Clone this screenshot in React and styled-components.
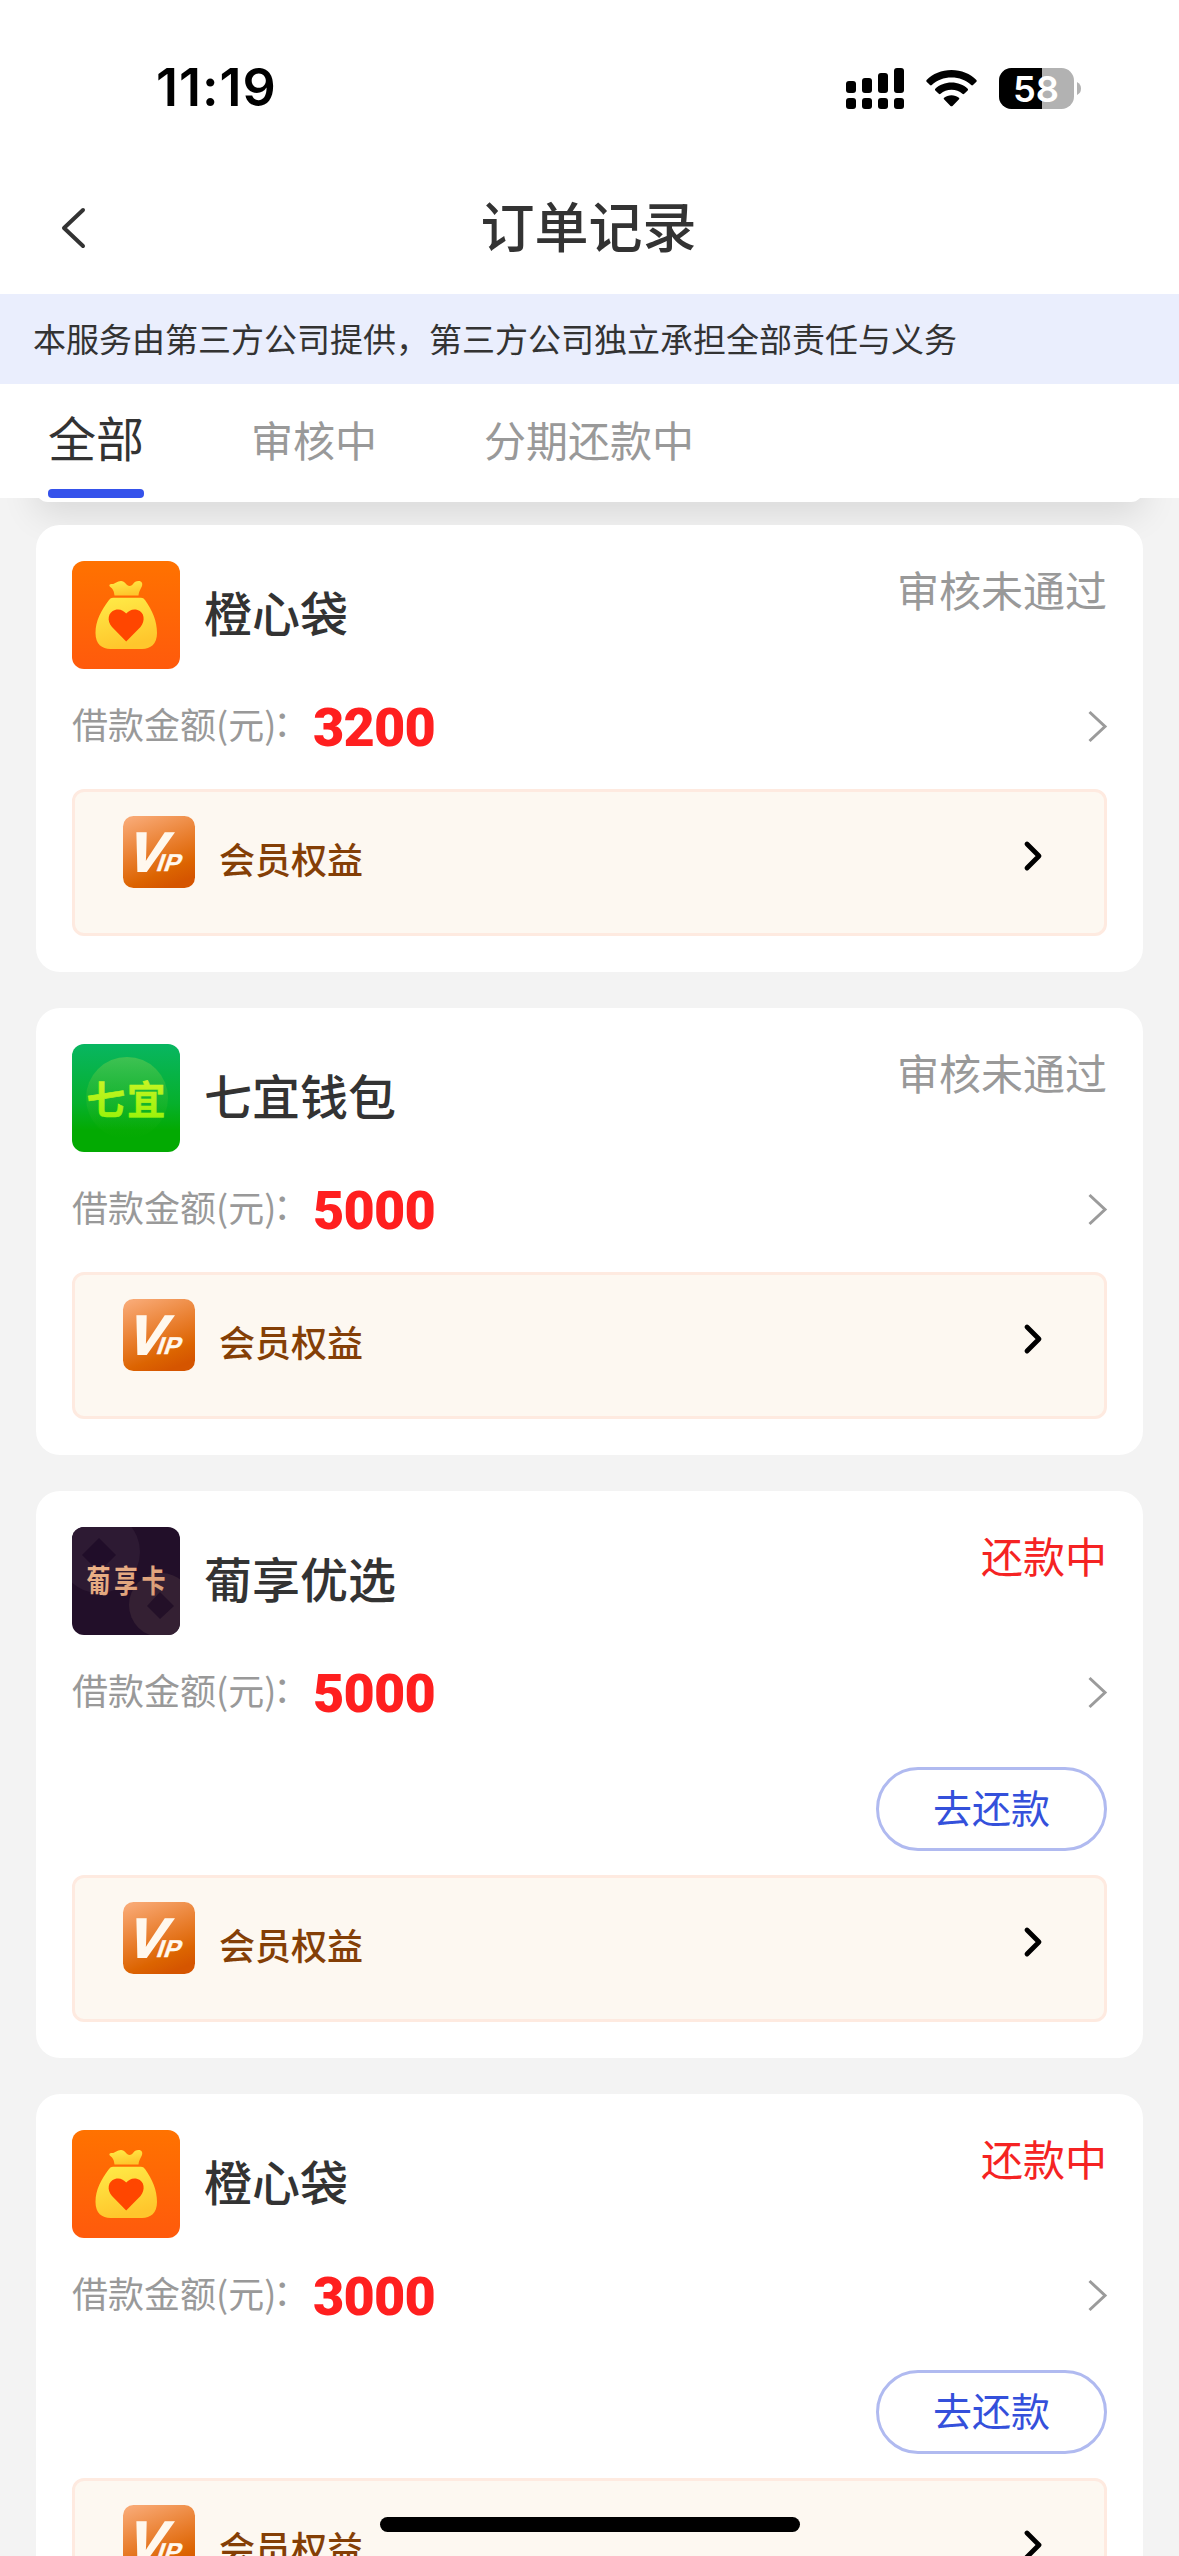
import React from "react";
import styled, { createGlobalStyle } from "styled-components";

const GlobalStyle = createGlobalStyle`
  *, *::before, *::after { box-sizing: border-box; }
  html, body { margin: 0; padding: 0; }
  body {
    background: #f3f3f3;
    color: #333;
    font-family: "Noto Sans CJK SC", "Noto Sans", sans-serif;
    overflow: hidden;
  }
  svg { display: block; overflow: visible; }
`;

const Screen = styled.div`
  position: relative;
  display: flex;
  flex-direction: column;
  width: 1179px;
  height: 2556px;
  overflow: hidden;
  background: #f3f3f3;
`;

const StatusBar = styled.div`
  flex: none;
  display: flex;
  justify-content: space-between;
  align-items: center;
  height: 162px;
  padding: 14px 98px 0 156px;
  background: #fff;
`;

const Clock = styled.div`
  font-family: Inter, sans-serif;
  font-size: 52px;
  font-weight: 600;
  line-height: 60px;
  letter-spacing: 1px;
  color: #000;
`;

const StatusIcons = styled.div`
  display: flex;
  align-items: center;
  gap: 22px;
`;

const NavBar = styled.header`
  flex: none;
  display: grid;
  grid-template-columns: 120px 1fr 120px;
  align-items: center;
  height: 132px;
  background: #fff;
`;

const BackButton = styled.button`
  display: flex;
  border: 0;
  padding: 0 0 0 60px;
  background: none;
`;

const Title = styled.h1`
  margin: 0;
  padding: 0 2px 6px 0;
  font-size: 54px;
  font-weight: 500;
  line-height: 78px;
  text-align: center;
  color: #333;
`;

const Notice = styled.div`
  flex: none;
  height: 90px;
  padding-left: 33px;
  background: #eaeefd;
  font-size: 33px;
  line-height: 88px;
  white-space: nowrap;
  color: #333;
`;

const Tabs = styled.nav`
  flex: none;
  display: flex;
  gap: 108px;
  height: 114px;
  padding-left: 48px;
  background: #fff;
`;

const Tab = styled.div`
  display: flex;
  flex-direction: column;
  justify-content: space-between;
  font-size: ${(p) => (p.$active ? 48 : 42)}px;
  line-height: ${(p) => (p.$active ? 104 : 109)}px;
  height: 114px;
  white-space: nowrap;
  color: ${(p) => (p.$active ? "#333" : "#999")};
`;

const TabLabel = styled.span`
  height: 104px;
  ${(p) => p.$nudge && "margin-left: -1px;"}
`;

const TabLine = styled.span`
  height: 9px;
  border-radius: 4px;
  background: #3552eb;
`;

const List = styled.main`
  flex: 1;
  min-height: 0;
  display: flex;
  flex-direction: column;
  padding: 0 36px;
  overflow: hidden;
`;

const ScrolledCard = styled.div`
  flex: none;
  height: 84px;
  margin: -80px 0 23px;
  border-radius: 12px;
  background: #fff;
  box-shadow: 0 12px 36px rgba(0, 0, 0, 0.11);
`;

const Card = styled.section`
  position: relative;
  flex: none;
  display: flex;
  flex-direction: column;
  margin-bottom: 36px;
  padding: 36px;
  border-radius: 24px;
  background: #fff;
`;

const CardHead = styled.div`
  display: flex;
  height: 108px;
`;

const Logo = styled.div`
  flex: none;
  width: 108px;
  height: 108px;
  border-radius: 12px;
  overflow: hidden;
`;

const Name = styled.h2`
  flex: 1;
  margin: 0 0 0 24px;
  font-size: 48px;
  font-weight: 500;
  line-height: 100px;
  color: #333;
`;

const State = styled.span`
  font-size: 42px;
  line-height: 56px;
  color: ${(p) => (p.$alert ? "#f52323" : "#999")};
`;

const AmountRow = styled.div`
  display: flex;
  align-items: center;
  height: 120px;
  padding-bottom: 6px;
`;

const AmountLabel = styled.span`
  display: flex;
  width: 241px;
  font-size: 36px;
  line-height: 54px;
  white-space: nowrap;
  color: #999;
  padding-bottom: 7px;
`;

const Colon = styled.span`
  margin-left: -3px;
  line-height: 50px;
`;

const Amount = styled.span`
  flex: 1;
  padding-top: 4px;
  font-family: Roboto, sans-serif;
  font-size: 54px;
  font-weight: 900;
  line-height: 64px;
  letter-spacing: -0.8px;
  color: #ff1f1f;
`;

const Actions = styled.div`
  display: flex;
  justify-content: flex-end;
  padding: 12px 0 24px;
`;

const RepayButton = styled.button`
  width: 231px;
  height: 84px;
  border: 3px solid #b0baf0;
  border-radius: 42px;
  padding: 0 0 7px;
  background: #fff;
  font-family: inherit;
  font-size: 39px;
  line-height: 56px;
  color: #3450db;
`;

const Benefit = styled.div`
  display: flex;
  align-items: flex-start;
  height: 147px;
  padding: 24px 62px 0 48px;
  border: 3px solid #feeae0;
  border-radius: 12px;
  background: #fdf8f1;
`;

const BenefitText = styled.span`
  flex: 1;
  margin-left: 24px;
  font-size: 36px;
  font-weight: 500;
  line-height: 84px;
  color: #843f06;
`;

const BenefitArrow = styled.div`
  padding-top: 25px;
`;

const HomeBar = styled.div`
  position: absolute;
  left: 380px;
  bottom: 24px;
  width: 420px;
  height: 15px;
  border-radius: 8px;
  background: #000;
`;

function Signal() {
  const bars = [13, 10, 5, 0];
  return (
    <svg width="58" height="41" viewBox="0 0 58 41">
      {bars.map((top, i) => (
        <g key={i}>
          <rect x={i * 16} y={top} width="10" height={25 - top} rx="3" />
          <rect x={i * 16} y="30" width="10" height="11" rx="3" />
        </g>
      ))}
    </svg>
  );
}

function Wifi() {
  return (
    <svg width="51" height="37" viewBox="0 0 51 37">
      <path d="M25.5 0C35.5 0 44.2 3.8 50.4 9.9Q51.2 10.8 50.4 11.7L47 15Q46.1 15.8 45.2 15C40 10.2 33.2 7.6 25.5 7.6S11 10.2 5.8 15Q4.9 15.8 4 15L.6 11.7Q-.2 10.8.6 9.9C6.8 3.8 15.5 0 25.5 0Z" />
      <path d="M25.5 12.5C31.8 12.5 37.5 14.8 41.7 18.7Q42.5 19.6 41.7 20.4L38.2 23.8Q37.3 24.6 36.4 23.8C33.5 21.2 29.7 19.7 25.5 19.7S17.5 21.2 14.6 23.8Q13.7 24.6 12.8 23.8L9.3 20.4Q8.5 19.6 9.3 18.7C13.5 14.8 19.2 12.5 25.5 12.5Z" />
      <path d="M25.5 25.2C28.3 25.2 30.9 26.1 32.9 27.7Q33.8 28.5 33 29.3L26.5 35.9Q25.5 36.8 24.5 35.9L18 29.3Q17.2 28.5 18.1 27.7C20.1 26.1 22.7 25.2 25.5 25.2Z" />
    </svg>
  );
}

function Battery() {
  return (
    <svg width="82" height="41" viewBox="0 0 82 41">
      <defs>
        <clipPath id="battery-shell">
          <rect width="75" height="41" rx="12.5" />
        </clipPath>
      </defs>
      <g clipPath="url(#battery-shell)">
        <rect width="75" height="41" fill="#b2b2b2" />
        <rect width="43" height="41" fill="#000" />
      </g>
      <path d="M78 14Q82 16 82 20.5T78 27Z" fill="#b2b2b2" />
      <text
        x="14"
        y="33.5"
        textLength="46"
        lengthAdjust="spacingAndGlyphs"
        fontFamily="Inter, sans-serif"
        fontSize="36"
        fontWeight="600"
        fill="#fff"
      >
        58
      </text>
    </svg>
  );
}

function BackIcon() {
  return (
    <svg width="26" height="42" viewBox="0 0 26 42">
      <path d="M23 3L4 21L23 39" fill="none" stroke="#333" strokeWidth="4" strokeLinecap="round" strokeLinejoin="round" />
    </svg>
  );
}

function RowArrow() {
  return (
    <svg width="19" height="31" viewBox="0 0 19 31">
      <path d="M1.5 1L17 15.5L1.5 30" fill="none" stroke="#9b9b9b" strokeWidth="3" />
    </svg>
  );
}

function BlackArrow() {
  return (
    <svg width="18" height="30" viewBox="0 0 18 30">
      <path d="M3 3L15 15L3 27" fill="none" stroke="#000" strokeWidth="4.8" strokeLinecap="round" strokeLinejoin="round" />
    </svg>
  );
}

function BagLogo() {
  return (
    <svg width="108" height="108" viewBox="0 0 108 108">
      <defs>
        <linearGradient id="bag-bg" x1="0" y1="0" x2="0" y2="1">
          <stop offset="0" stopColor="#ff7200" />
          <stop offset="1" stopColor="#ff5a0c" />
        </linearGradient>
        <linearGradient id="bag-body" x1="0" y1="0" x2="0.3" y2="1">
          <stop offset="0" stopColor="#ffec48" />
          <stop offset="1" stopColor="#ffc62c" />
        </linearGradient>
      </defs>
      <rect width="108" height="108" fill="url(#bag-bg)" />
      <path
        d="M42.5 34.5C42 30 41 28 37.8 25.5C36.5 23.8 38.2 22.6 40 23C43 23.2 45 20 49 20C53 20 54.5 25 57.5 25C61.5 25 61 20 66.5 20C70 20 71 22.5 69.8 25.5C68.5 28.5 67 30 66.5 34.5Z"
        fill="url(#bag-body)"
      />
      <path
        d="M41 36.8H69Q71.5 36.8 73 39C80.5 49.5 85 60 85 72C85 83 78.5 88 70 88H38.5C30 88 23.5 83 23.5 72C23.5 60 29 49.5 37 39Q38.5 36.8 41 36.8Z"
        fill="url(#bag-body)"
      />
      <path
        d="M54.2 80.5L40 66C34.5 59.5 36 51 43 48.9C48 47.6 51.5 49.5 54.2 52.5C57 49.5 60.5 47.6 65.5 48.9C72.5 51 73.5 59.5 68.5 66Z"
        fill="#ff4600"
      />
    </svg>
  );
}

function QiyiLogo() {
  return (
    <svg width="108" height="108" viewBox="0 0 108 108">
      <defs>
        <linearGradient id="qiyi-bg" x1="0" y1="0" x2="0" y2="1">
          <stop offset="0" stopColor="#08b661" />
          <stop offset="0.55" stopColor="#06b02c" />
          <stop offset="0.8" stopColor="#03aa02" />
        </linearGradient>
        <linearGradient id="qiyi-disc" x1="0" y1="0" x2="0" y2="1">
          <stop offset="0" stopColor="#4cc552" stopOpacity="0.8" />
          <stop offset="1" stopColor="#20b410" stopOpacity="0" />
        </linearGradient>
        <linearGradient id="qiyi-text" x1="0" y1="0" x2="0" y2="1">
          <stop offset="0" stopColor="#d6f52b" />
          <stop offset="1" stopColor="#93f206" />
        </linearGradient>
      </defs>
      <rect width="108" height="108" fill="url(#qiyi-bg)" />
      <circle cx="55" cy="54" r="41" fill="url(#qiyi-disc)" />
      <text
        x="14.5"
        y="69.5"
        letterSpacing="2"
        fontFamily="'Noto Sans CJK SC', sans-serif"
        fontSize="38.5"
        fontWeight="700"
        stroke="url(#qiyi-text)"
        strokeWidth="0.6"
        fill="url(#qiyi-text)"
      >
        七宜
      </text>
    </svg>
  );
}

function PuxiangLogo() {
  return (
    <svg width="108" height="108" viewBox="0 0 108 108">
      <defs>
        <linearGradient id="px-text" x1="0" y1="0" x2="1" y2="1">
          <stop offset="0" stopColor="#f0b68b" />
          <stop offset="1" stopColor="#d79a74" />
        </linearGradient>
      </defs>
      <rect width="108" height="108" fill="#220f29" />
      <circle cx="27" cy="25" r="41" fill="#2d1a33" />
      <circle cx="89" cy="78" r="32" fill="#342033" />
      <path d="M27 11L44 28L27 45L10 28Z" fill="#200d29" />
      <path d="M88 65L102 79L88 92L75 79Z" fill="#231028" />
      <text
        transform="translate(54 65) scale(1 1.3)"
        textAnchor="middle"
        textLength="79"
        fontFamily="'Noto Sans CJK SC', sans-serif"
        fontSize="24"
        fontWeight="700"
        fill="url(#px-text)"
      >
        葡享卡
      </text>
    </svg>
  );
}

function VipIcon() {
  return (
    <svg width="72" height="72" viewBox="0 0 72 72">
      <defs>
        <linearGradient id="vip-bg" x1="0.2" y1="0" x2="0.6" y2="1">
          <stop offset="0" stopColor="#f8a873" />
          <stop offset="0.5" stopColor="#e87c2a" />
          <stop offset="0.8" stopColor="#dc6401" />
          <stop offset="1" stopColor="#d55500" />
        </linearGradient>
      </defs>
      <rect width="72" height="72" rx="10.5" fill="url(#vip-bg)" />
      <text
        transform="translate(1 55) skewX(-19)"
        fontFamily="'Liberation Sans', sans-serif"
        fontWeight="700"
        fill="#fff8ee"
      >
        <tspan fontSize="55" stroke="#fff8ee" strokeWidth="1.8">V</tspan>
        <tspan dx="-5.5" fontSize="24.5" stroke="#fff8ee" strokeWidth="0.4">I</tspan>
        <tspan dx="0.5" fontSize="24.5" stroke="#fff8ee" strokeWidth="0.4">P</tspan>
      </text>
    </svg>
  );
}

const LOGOS = { bag: BagLogo, qiyi: QiyiLogo, puxiang: PuxiangLogo };

const ORDERS = [
  { logo: "bag", name: "橙心袋", state: "审核未通过", amount: 3200, repay: false },
  { logo: "qiyi", name: "七宜钱包", state: "审核未通过", amount: 5000, repay: false },
  { logo: "puxiang", name: "葡享优选", state: "还款中", amount: 5000, repay: true },
  { logo: "bag", name: "橙心袋", state: "还款中", amount: 3000, repay: true },
];

function OrderCard({ order }) {
  const Mark = LOGOS[order.logo];
  return (
    <Card>
      <CardHead>
        <Logo>
          <Mark />
        </Logo>
        <Name>{order.name}</Name>
        <State $alert={order.repay}>{order.state}</State>
      </CardHead>
      <AmountRow>
        <AmountLabel>
          借款金额(元)<Colon>：</Colon>
        </AmountLabel>
        <Amount>{order.amount}</Amount>
        <RowArrow />
      </AmountRow>
      {order.repay && (
        <Actions>
          <RepayButton>去还款</RepayButton>
        </Actions>
      )}
      <Benefit>
        <VipIcon />
        <BenefitText>会员权益</BenefitText>
        <BenefitArrow>
          <BlackArrow />
        </BenefitArrow>
      </Benefit>
    </Card>
  );
}

export default function App() {
  return (
    <Screen>
      <GlobalStyle />
      <StatusBar>
        <Clock>11:19</Clock>
        <StatusIcons>
          <Signal />
          <Wifi />
          <Battery />
        </StatusIcons>
      </StatusBar>
      <NavBar>
        <BackButton aria-label="返回">
          <BackIcon />
        </BackButton>
        <Title>订单记录</Title>
      </NavBar>
      <Notice>本服务由第三方公司提供，第三方公司独立承担全部责任与义务</Notice>
      <Tabs>
        <Tab $active>
          <TabLabel>全部</TabLabel>
          <TabLine />
        </Tab>
        <Tab>
          <TabLabel $nudge>审核中</TabLabel>
        </Tab>
        <Tab>
          <TabLabel $nudge>分期还款中</TabLabel>
        </Tab>
      </Tabs>
      <List>
        <ScrolledCard />
        {ORDERS.map((order, i) => (
          <OrderCard key={i} order={order} />
        ))}
      </List>
      <HomeBar />
    </Screen>
  );
}
